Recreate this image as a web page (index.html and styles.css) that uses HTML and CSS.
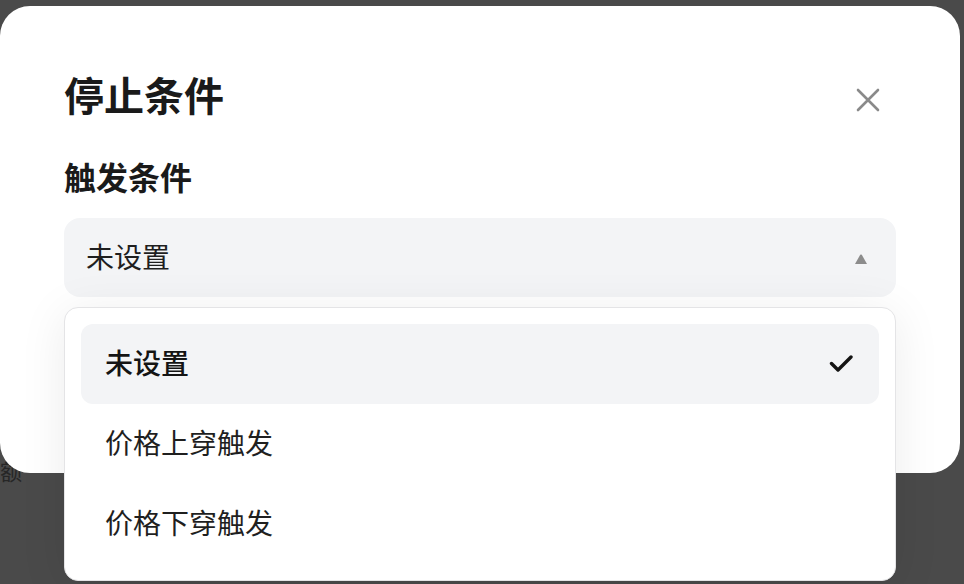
FILE: index.html
```html
<!DOCTYPE html>
<html lang="zh-CN">
<head>
<meta charset="utf-8">
<title>停止条件</title>
<link rel="stylesheet" href="styles.css">
</head>
<body>
<div class="page">
  <div class="page-text">额</div>
</div>
<div class="modal">
  <div class="modal-header">
    <h1 class="modal-title">停止条件</h1>
    <button class="close-btn" aria-label="关闭">
      <svg width="24" height="24" viewBox="0 0 24 24"><path d="M2 2 L22 22 M22 2 L2 22" stroke="#8a8a8a" stroke-width="2.6" stroke-linecap="round" fill="none"/></svg>
    </button>
  </div>
  <h2 class="field-label">触发条件</h2>
  <div class="select-wrap">
    <div class="select">
      <span class="select-value">未设置</span>
      <svg class="caret" width="12" height="10" viewBox="0 0 12 10"><path d="M5.2 0.8 Q6 0 6.8 0.8 L12 10 L0 10 Z" fill="#8c8c8c"/></svg>
    </div>
    <div class="dropdown">
      <div class="option selected">
        <span class="option-text">未设置</span>
        <svg width="24" height="20" viewBox="0 0 24 20"><path d="M2.5 9.5 L9 16 L22 3" stroke="#141414" stroke-width="3.4" stroke-linecap="round" stroke-linejoin="round" fill="none"/></svg>
      </div>
      <div class="option"><span class="option-text">价格上穿触发</span></div>
      <div class="option"><span class="option-text">价格下穿触发</span></div>
    </div>
  </div>
</div>
</body>
</html>
```
FILE: styles.css
```css
* { box-sizing: border-box; }
html, body {
  margin: 0;
  padding: 0;
}
body {
  width: 964px;
  height: 584px;
  overflow: hidden;
  background: #4a4a4a;
  position: relative;
  font-family: "Noto Sans CJK SC", "Noto Sans", sans-serif;
  color: #1a1a1a;
}
.page {
  padding-top: 455px;
}
.page-text {
  margin-left: 0;
  font-size: 22px;
  line-height: 30px;
  color: #262626;
}
.modal {
  position: absolute;
  top: 6px;
  left: 0;
  width: 960px;
  height: 467px;
  background: #ffffff;
  border-radius: 30px;
  padding: 64px 64px 0 64px;
}
.modal-header {
  display: flex;
  align-items: center;
  justify-content: space-between;
  height: 48px;
}
.modal-title {
  margin: 0;
  font-size: 40px;
  line-height: 48px;
  font-weight: 700;
  color: #1a1a1a;
}
.close-btn {
  margin: 12px 16px 0 0;
  padding: 0;
  border: 0;
  background: none;
  width: 24px;
  height: 24px;
  display: flex;
}
.field-label {
  margin: 38px 0 0 0;
  font-size: 32px;
  line-height: 40px;
  font-weight: 700;
  color: #1a1a1a;
}
.select-wrap {
  position: relative;
  margin-top: 22px;
}
.select {
  height: 79px;
  border-radius: 16px;
  background: #f3f4f6;
  display: flex;
  align-items: center;
  justify-content: space-between;
  padding: 0 29px 0 22px;
}
.select-value {
  font-size: 28px;
  line-height: 40px;
  margin-bottom: 4px;
  color: #1f1f1f;
}
.caret {
  margin-top: 2px;
}
.dropdown {
  position: absolute;
  top: calc(100% + 10px);
  left: 0;
  width: 832px;
  background: #ffffff;
  border: 1px solid #e4e4e6;
  border-radius: 14px;
  padding: 16px;
  box-shadow: 0 6px 48px rgba(0, 0, 0, 0.08);
}
.option {
  height: 80px;
  border-radius: 12px;
  display: flex;
  align-items: center;
  justify-content: space-between;
  padding: 0 26px 0 24px;
  font-size: 28px;
  line-height: 40px;
  color: #1f1f1f;
}
.option-text {
  margin-bottom: 4px;
}
.option.selected {
  background: #f3f4f6;
  font-weight: 500;
  color: #141414;
}
```
